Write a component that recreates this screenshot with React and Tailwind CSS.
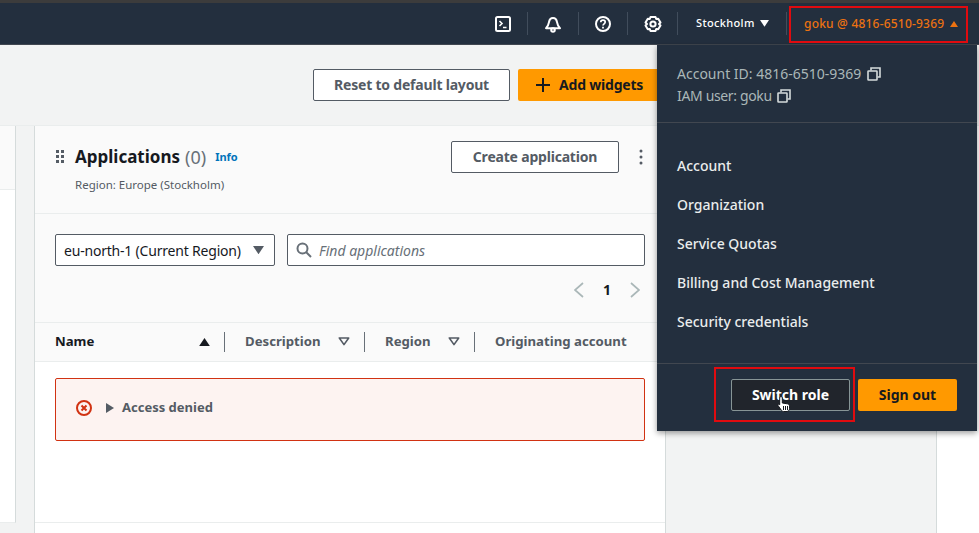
import React from "react";

const font = { fontFamily: '"Noto Sans", sans-serif' };

function Terminal() {
  return (
    <svg width="18" height="18" viewBox="0 0 18 18" fill="none" stroke="#fff" strokeWidth="2">
      <rect x="2" y="2" width="14" height="14" rx="1.5" />
      <path d="M5.5 6l2.5 2.5-2.5 2.5M9 12.5h3.5" strokeWidth="1.6" />
    </svg>
  );
}
function Bell() {
  return (
    <svg width="18" height="18" viewBox="0 0 18 18" fill="none" stroke="#fff" strokeWidth="2" strokeLinejoin="round">
      <path d="M2 13.2h14c-2-1.8-2.6-3.6-3-6C12.6 4.6 11 3 9 3S5.400 4.600 5 7.200c-.4 2.400-1 4.200-3 6z" />
      <circle cx="9" cy="15" r="1.800" />
    </svg>
  );
}
function Help() {
  return (
    <svg width="18" height="18" viewBox="0 0 18 18" fill="none" stroke="#fff" strokeWidth="2">
      <circle cx="9" cy="9" r="7" />
      <path d="M6.800 7.200C6.800 5.900 7.800 5.200 9 5.200s2.200.8 2.200 1.900c0 1.700-2.200 1.700-2.200 3.400" strokeWidth="1.700" />
      <path d="M9 11.800v1.700" strokeWidth="1.800" />
    </svg>
  );
}
function Gear() {
  return (
    <svg width="18" height="18" viewBox="0 0 18 18" fill="none" stroke="#fff" strokeWidth="2" strokeLinejoin="round">
      <path d="M6.500 2h5l.7 2 2-.3 2.300 3.800L15 9l1.500 1.500-2.300 3.800-2-.3-.7 2h-5l-.7-2-2 .3-2.300-3.800L3 9 1.500 7.500l2.300-3.800 2 .3z" />
      <circle cx="9" cy="9" r="2.600" />
    </svg>
  );
}
function Copy() {
  return (
    <svg width="14" height="14" viewBox="0 0 14 14" fill="none" stroke="#d5dbdb" strokeWidth="1.600">
      <rect x="1" y="4" width="9" height="9" rx="0.500" />
      <path d="M4 3.500V1h9v9h-2.500" />
    </svg>
  );
}
const Caret = ({ color, up, size = 8 }) => (
  <svg width={size} height={size * 0.75} viewBox="0 0 8 6">
    <path d={up ? "M4 0l4 6H0z" : "M0 0h8L4 6z"} fill={color} />
  </svg>
);
const Sep = () => <div className="h-[23px] w-px bg-[#414d5c]" />;

const NavIcon = ({ children, w }) => (
  <div className="flex items-center justify-center" style={{ width: w }}>
    {children}
  </div>
);

const menu = ["Account", "Organization", "Service Quotas", "Billing and Cost Management", "Security credentials"];

function Filter() {
  return (
    <svg width="12" height="9" viewBox="0 0 12 9" fill="none" stroke="#545b64" strokeWidth="1.600">
      <path d="M1.300 1h9.400L6 7.600z" strokeLinejoin="round" />
    </svg>
  );
}

export default function App() {
  return (
    <div className="relative h-[533px] w-[979px] overflow-hidden bg-[#f2f3f3]" style={font}>
      <div className="h-[3px] bg-[#3c3c3c]" />
      <nav className="flex h-[42px] items-center justify-end border-b border-[#414750] bg-[#232f3e] pr-[12px] text-white">
        <div className="flex items-center">
          <NavIcon w="32px"><Terminal /></NavIcon>
          <div className="w-[8px]" />
          <Sep />
          <div className="w-[16px]" />
          <NavIcon w="18px"><Bell /></NavIcon>
          <div className="w-[16px]" />
          <Sep />
          <div className="w-[15px]" />
          <NavIcon w="18px"><Help /></NavIcon>
          <div className="w-[15px]" />
          <Sep />
          <div className="w-[16px]" />
          <NavIcon w="18px"><Gear /></NavIcon>
          <div className="w-[15px]" />
          <Sep />
          <div className="flex w-[108px] items-center pl-[18px]">
            <span className="text-[11px] font-medium tracking-[0.35px]">Stockholm</span>
            <span className="ml-[5px]"><Caret color="#fff" size={9} /></span>
          </div>
          <Sep />
          <div className="flex w-[180px] items-center pl-[17px]">
            <span className="whitespace-nowrap text-[12px] font-medium tracking-[0.2px] text-[#ec7211]">goku @ 4816-6510-9369</span>
            <span className="ml-[6px]"><Caret color="#ec7211" up /></span>
          </div>
        </div>
      </nav>

      <div className="flex h-[80px] w-[665px] items-start justify-end gap-2 pt-[24px]">
        <button className="h-[32px] w-[197px] rounded-[2px] border border-[#545b64] bg-white pb-[2px] text-[14px] font-bold tracking-[-0.2px] text-[#545b64]">
          Reset to default layout
        </button>
        <button className="flex h-[32px] w-[147px] items-center rounded-[2px] bg-[#ff9900] pb-[2px] pl-[18px] text-[14px] font-bold tracking-[-0.2px] text-[#16191f]">
          <svg width="14" height="14" viewBox="0 0 14 14" className="mt-[2px] mr-[9px]" stroke="#16191f" strokeWidth="2">
            <path d="M7 0v14M0 7h14" />
          </svg>
          Add widgets
        </button>
      </div>

      <div className="flex h-[408px] border-t border-[#eaeded]">
        <div className="flex h-[397px] w-[16px] flex-col border-r border-b border-[#d5dbdb] border-b-[#eaeded]">
          <div className="h-[64px] border-b border-[#eaeded] bg-[#fafafa]" />
          <div className="flex-1 bg-white" />
        </div>
        <div className="ml-[18px] flex w-[632px] flex-col border-x border-[#d5dbdb] bg-white">
          <div className="h-[88px] border-b border-[#eaeded] bg-[#fafafa]">
            <div className="flex items-start justify-between pt-[15px] pr-[22px] pl-[20px]">
              <div>
                <div className="flex items-center">
                  <svg width="10" height="14" viewBox="0 0 10 14" fill="#545b64">
                    <rect x="1" y="0" width="3" height="3" /><rect x="6" y="0" width="3" height="3" />
                    <rect x="1" y="5" width="3" height="3" /><rect x="6" y="5" width="3" height="3" />
                    <rect x="1" y="10" width="3" height="3" /><rect x="6" y="10" width="3" height="3" />
                  </svg>
                  <h2 className="ml-[10px] text-[17px] leading-[32px] font-bold text-[#16191f]">Applications</h2>
                  <span className="ml-[5px] text-[18px] text-[#687078]">(0)</span>
                  <span className="ml-[9px] text-[11px] font-bold text-[#0073bb]">Info</span>
                </div>
                <p className="mt-[4px] ml-[20px] text-[11.500px] leading-[16px] text-[#545b64]">Region: Europe (Stockholm)</p>
              </div>
              <div className="flex items-center">
                <button className="h-[32px] w-[168px] rounded-[2px] border border-[#545b64] bg-white pb-[2px] text-[14px] font-bold tracking-[-0.2px] text-[#545b64]">
                  Create application
                </button>
                <svg width="4" height="16" viewBox="0 0 4 16" fill="#545b64" className="ml-[20px]">
                  <circle cx="2" cy="2" r="1.500" /><circle cx="2" cy="8" r="1.500" /><circle cx="2" cy="14" r="1.500" />
                </svg>
              </div>
            </div>
          </div>

          <div className="h-[109px] border-b border-[#eaeded] bg-[#fafafa] px-[20px] pt-[20px]">
            <div className="flex gap-[12px]">
              <div className="flex h-[32px] w-[220px] items-center justify-between rounded-[2px] border border-[#545b64] bg-white pr-[10px] pl-[8px] text-[14px] tracking-[-0.2px] text-[#16191f]">
                <span className="whitespace-nowrap">eu-north-1 (Current Region)</span>
                <Caret color="#545b64" size={11} />
              </div>
              <div className="flex h-[32px] flex-1 items-center rounded-[2px] border border-[#545b64] bg-white pl-[8px] text-[14px] text-[#687078] italic">
                <svg width="16" height="16" viewBox="0 0 16 16" fill="none" stroke="#687078" strokeWidth="2" className="mr-[7px]">
                  <circle cx="6.500" cy="6.500" r="5" /><path d="M10 10l5 5" />
                </svg>
                <span className="pt-[1px]">Find applications</span>
              </div>
            </div>
            <div className="mt-[13px] flex items-center justify-end gap-[19px] pr-[5px]">
              <svg width="10" height="16" viewBox="0 0 10 16" fill="none" stroke="#aab7b8" strokeWidth="1.700"><path d="M9 1L1 8l8 7" /></svg>
              <span className="text-[14px] font-bold text-[#16191f]">1</span>
              <svg width="10" height="16" viewBox="0 0 10 16" fill="none" stroke="#aab7b8" strokeWidth="1.700"><path d="M1 1l8 7-8 7" /></svg>
            </div>
          </div>

          <div className="flex h-[39px] items-center border-b border-[#eaeded] bg-[#fafafa] text-[13.200px] font-bold text-[#545b64]">
            <div className="flex w-[189px] items-center justify-between pr-[14px] pl-[20px]">
              <span className="text-[#16191f]">Name</span>
              <Caret color="#16191f" up size={11} />
            </div>
            <div className="h-[20px] w-px bg-[#687078]" />
            <div className="flex w-[139px] items-center justify-between pr-[14px] pl-[20px]">
              <span>Description</span>
              <Filter />
            </div>
            <div className="h-[20px] w-px bg-[#687078]" />
            <div className="flex w-[109px] items-center justify-between pr-[14px] pl-[20px]">
              <span>Region</span>
              <Filter />
            </div>
            <div className="h-[20px] w-px bg-[#687078]" />
            <div className="pl-[20px] whitespace-nowrap">Originating account</div>
          </div>

          <div className="h-[161px] border-b border-[#eaeded] px-[20px] pt-[16px]">
            <div className="flex h-[63px] items-center rounded-[2px] border border-[#d13212] bg-[#fdf3f1] pb-[4px] pl-[20px]">
              <svg width="16" height="16" viewBox="0 0 16 16" fill="none" stroke="#d13212" strokeWidth="2">
                <circle cx="8" cy="8" r="7" /><path d="M5.500 5.500l5 5M10.500 5.500l-5 5" />
              </svg>
              <svg width="8" height="10" viewBox="0 0 8 10" fill="#545b64" className="ml-[14px]"><path d="M0 0l8 5-8 5z" /></svg>
              <span className="ml-[8px] text-[13px] font-bold text-[#545b64]">Access denied</span>
            </div>
          </div>
          <div className="flex-1" />
        </div>
        <div className="ml-[270px] w-[43px] border-l border-[#d5dbdb] bg-white" />
      </div>

      <div className="absolute top-[45px] left-[657px] flex h-[386px] w-[320px] flex-col bg-[#232f3e] shadow-[0_2px_6px_rgba(0,0,0,0.4)]">
        <div className="h-[78px] border-b border-[#414750] pt-[18px] pl-[20px] text-[14px] leading-[22px] text-[#aab7b8]">
          <div className="flex items-center gap-[6px]">Account ID: 4816-6510-9369 <Copy /></div>
          <div className="flex items-center gap-[5px] tracking-[-0.35px]">IAM user: goku <Copy /></div>
        </div>
        <ul className="h-[241px] border-b border-[#414750] pt-[23px] pl-[20px] text-[14px] font-medium text-[#eaeded]">
          {menu.map((m) => (
            <li key={m} className="h-[39px] leading-[39px]">{m}</li>
          ))}
        </ul>
        <div className="flex justify-end gap-[8px] pt-[15px] pr-[20px]">
          <button className="h-[32px] w-[119px] rounded-[2px] border border-[#879596] bg-[#21252c] pb-[2px] text-[14px] font-bold text-white">
            Switch role
          </button>
          <button className="h-[32px] w-[99px] rounded-[2px] bg-[#ff9900] pb-[2px] text-[14px] font-bold text-[#16191f]">
            Sign out
          </button>
        </div>
      </div>

      <div className="absolute top-[6px] left-[789px] h-[37px] w-[179px] border-2 border-[#e00b0f]" />
      <div className="absolute top-[367px] left-[714px] h-[55px] w-[141px] border-2 border-[#e00b0f]" />
      <svg width="14" height="18" viewBox="0 0 14 18" className="absolute top-[395px] left-[777px]">
        <path d="M4 1.500c.8 0 1.300.5 1.300 1.300V8l5 .8c1.500.3 2.200 1 2.200 2.400v2.300c0 1.500-1 3-2.500 3H6.500c-1 0-1.700-.6-2.300-1.500L1 10.500c-.5-.8.500-1.800 1.500-1l.2.300V2.800C2.700 2 3.200 1.500 4 1.500z" fill="#fff" stroke="#16191f" strokeWidth="1" />
        <path d="M6.500 11v4M8.500 11v4M10.500 11v4" stroke="#16191f" strokeWidth="1" />
      </svg>
    </div>
  );
}
